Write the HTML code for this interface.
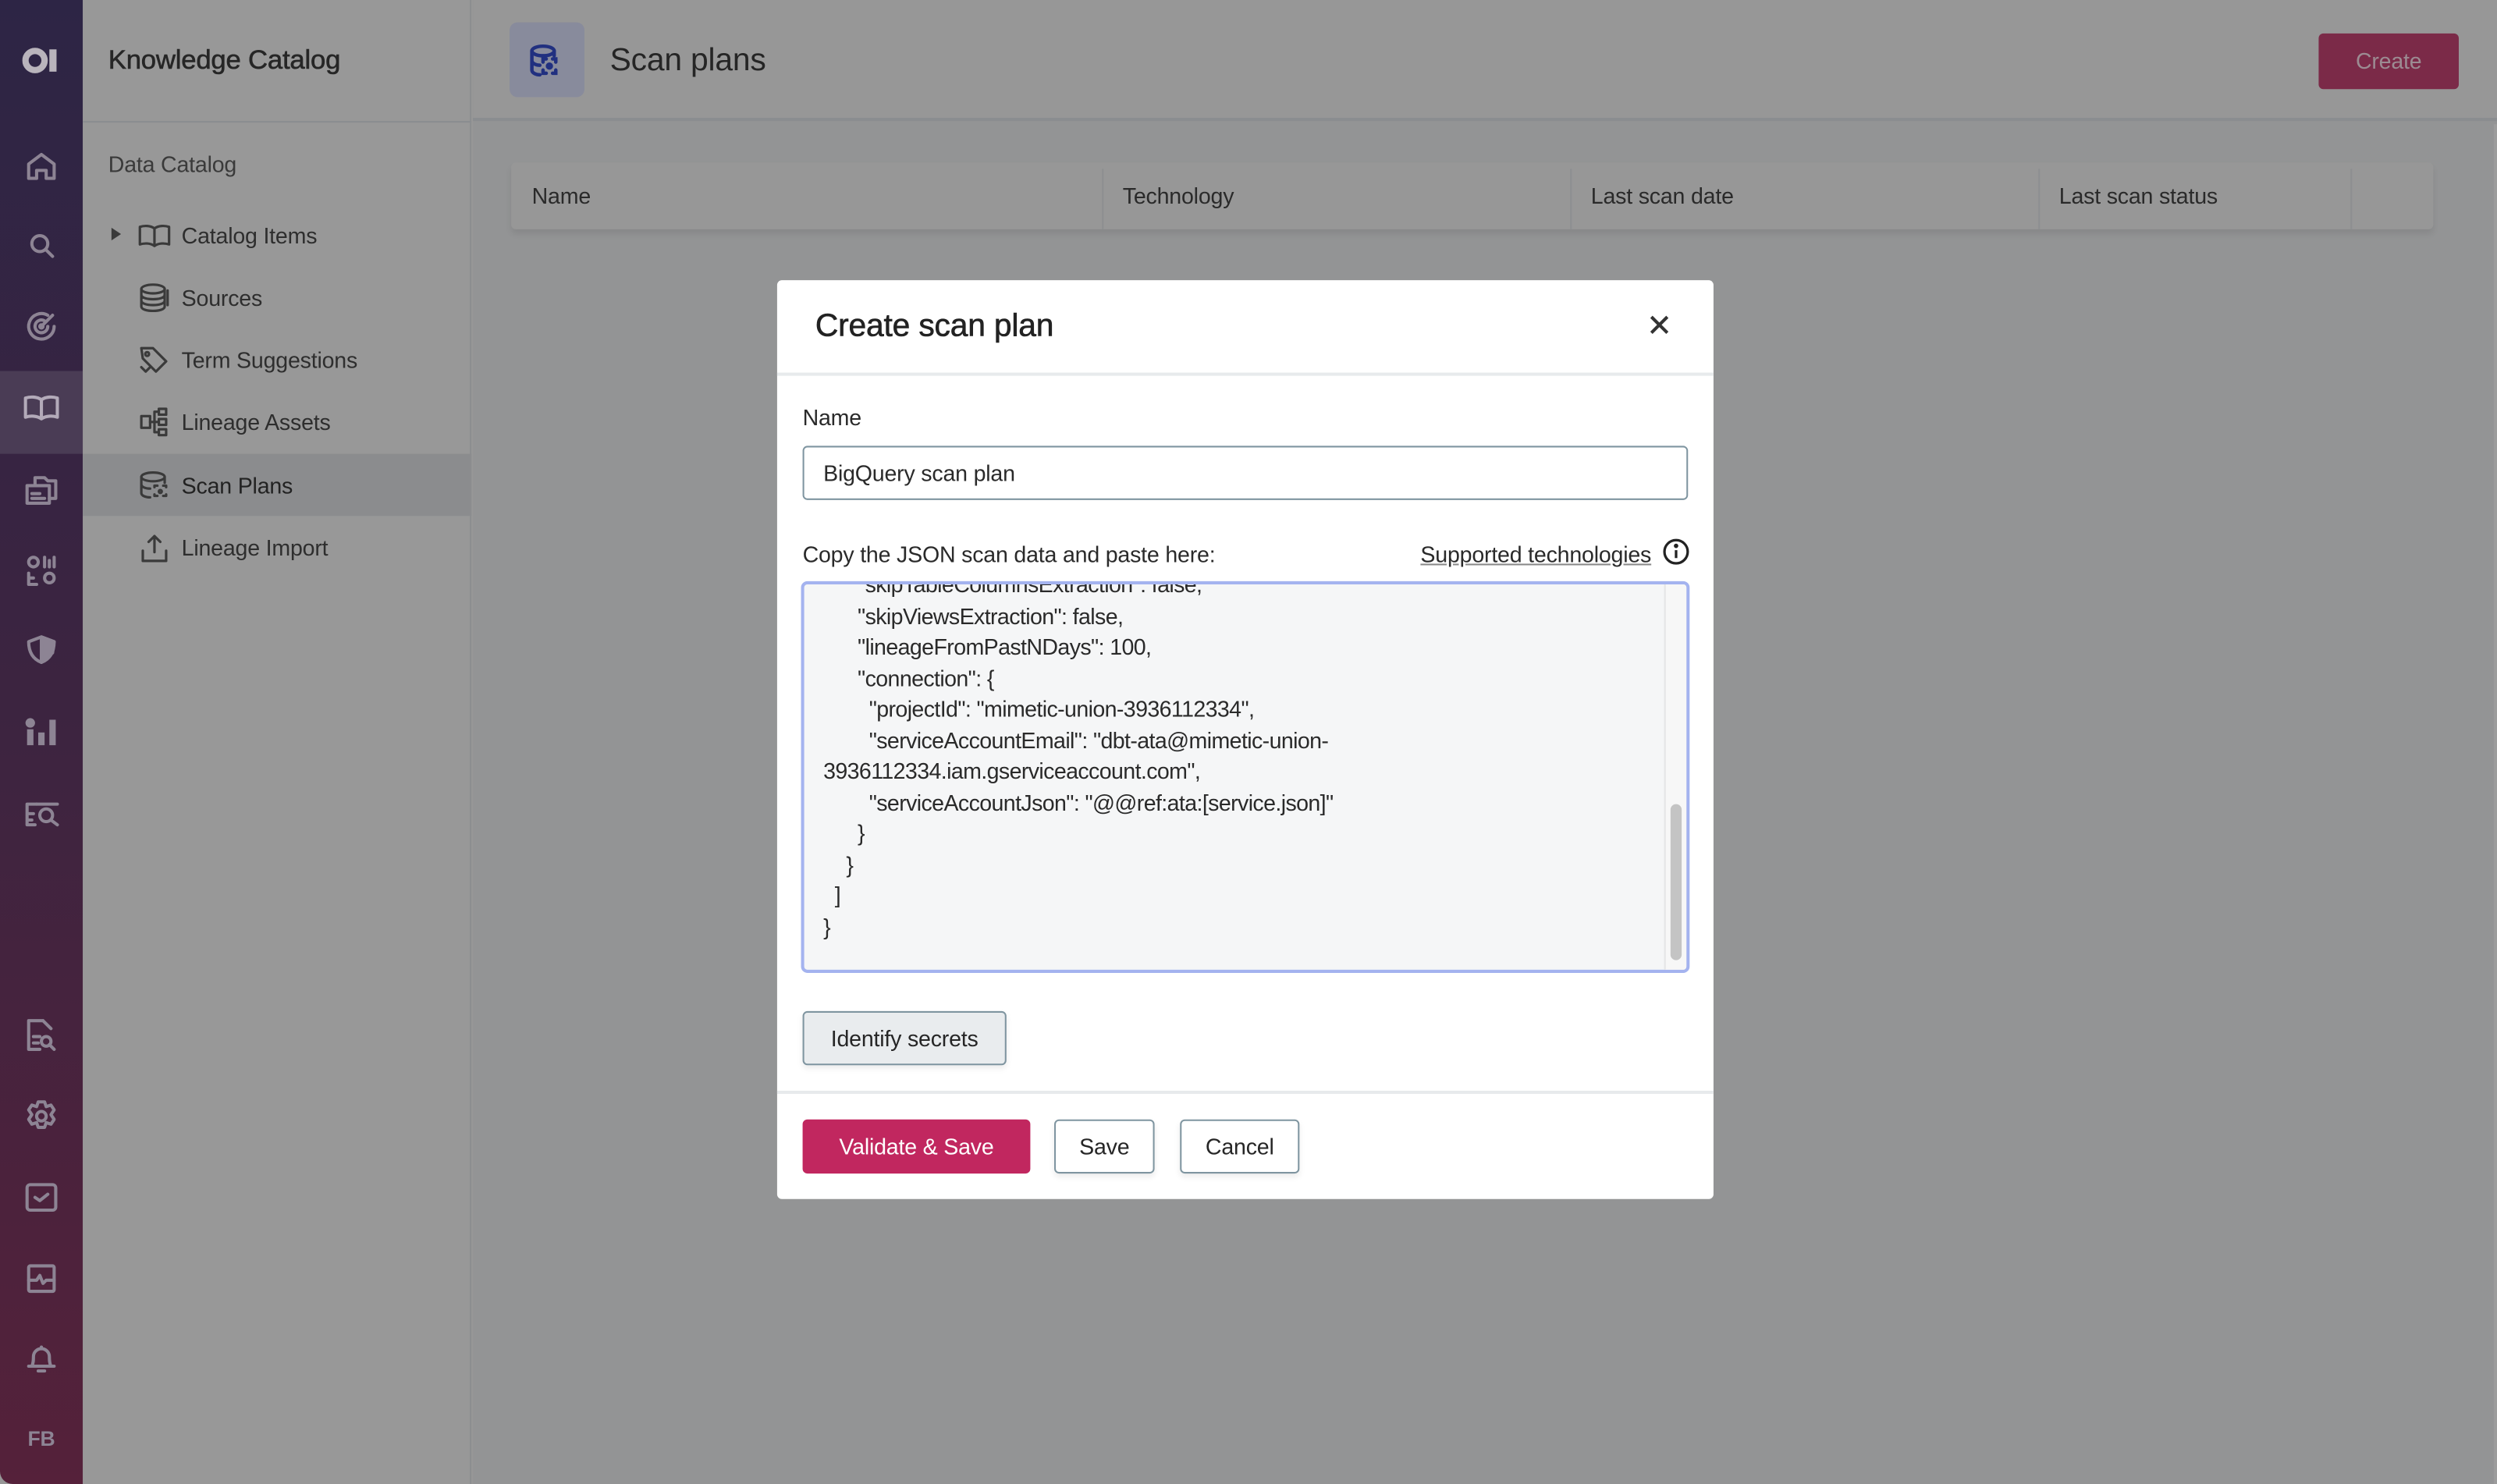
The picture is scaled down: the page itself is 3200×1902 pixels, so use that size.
<!DOCTYPE html>
<html><head><meta charset="utf-8">
<style>
*{box-sizing:border-box;margin:0;padding:0}
html,body{width:3200px;height:1902px;overflow:hidden;background:#979797}
#w{position:absolute;left:0;top:0;width:1568px;height:932px;transform:scale(2.040816);transform-origin:0 0;font-family:"Liberation Sans",sans-serif;color:#2a2a2a;letter-spacing:-0.1px}
.rail{position:absolute;left:0;top:0;width:52px;height:932px;background:linear-gradient(#2d2545,#3d2440 50%,#55213a);border-bottom-left-radius:8px}
.ri{position:absolute;left:14px;width:24px;height:24px}
.ri svg{width:24px;height:24px;fill:none;stroke:#8d8494;stroke-width:2;stroke-linecap:round;stroke-linejoin:round}
.sub{position:absolute;left:52px;top:0;width:244px;height:932px;background:#989898;border-right:1px solid #8c8e90}
.sub h1{position:absolute;left:16px;top:28px;font-size:17px;font-weight:normal;color:#262626;-webkit-text-stroke:0.3px #262626}
.sub .hl{position:absolute;left:0;top:76px;width:244px;height:1px;background:#8a8d90}
.sub .dc{position:absolute;left:16px;top:95px;font-size:14px;color:#3a3a3a}
.it{position:absolute;left:0;width:244px;height:39px;font-size:14px;color:#2e2e2e}
.it span{position:absolute;left:62px;top:12px}
.it svg{position:absolute;left:34px;top:9px;width:22px;height:22px;fill:none;stroke:#3a3a3a;stroke-width:1.7;stroke-linejoin:round;stroke-linecap:round}
.main{position:absolute;left:297px;top:0;width:1271px;height:932px;background:#939495}
.top{position:absolute;left:0;top:0;width:1271px;height:76px;background:#979797;border-bottom:2px solid #8a8d90}
.ic{position:absolute;left:23px;top:14px;width:47px;height:47px;border-radius:5px;background:#888b9c}
.top .t{position:absolute;left:86px;top:27px;font-size:20px;color:#252525}
.cr{position:absolute;left:1159px;top:21px;width:88px;height:35px;border-radius:3px;background:#7b2a48;color:#9c8b92;font-size:14px;text-align:center;line-height:35px}
.tbl{position:absolute;left:24px;top:102px;width:1207px;height:42px;background:#979797;border-radius:3px;box-shadow:0 3px 4px rgba(0,0,0,.08)}
.tbl div{position:absolute;top:13px;font-size:14px;color:#2a2a2a}
.tbl i{position:absolute;top:4px;width:1px;height:38px;background:#8d8f91}
.dlg{position:absolute;left:488px;top:176px;width:588px;height:577px;background:#fff;border-radius:3px}
.lbl{position:absolute;font-size:14px;color:#2a2a2a}
.inp{position:absolute;left:16px;top:104px;width:556px;height:34px;border:1px solid #7f95a0;border-radius:3px;font-size:14px;padding:8px 12px;color:#2a2a2a}
.ta{position:absolute;left:15px;top:189px;width:558px;height:246px;border:2px solid #a4b3ef;border-radius:4px;background:#f5f6f7;overflow:hidden}
.ta pre{position:absolute;left:12px;top:-9px;font-family:"Liberation Sans",sans-serif;font-size:14px;line-height:19.5px;color:#2a2a2a;white-space:pre;letter-spacing:-0.3px}
.sb{position:absolute;right:0;top:0;width:14px;height:242px;border-left:1px solid #e4e5e6;background:#f7f7f7}
.sb b{position:absolute;left:3px;top:138px;width:7px;height:98px;border-radius:4px;background:#c4c4c4}
.btn{position:absolute;height:34px;border:1px solid #7f95a0;border-radius:3px;font-size:14px;line-height:32px;text-align:center;color:#262626;box-shadow:0 2px 4px rgba(0,0,0,.08);background:#fff}
</style></head><body><div id="w">
<div class="rail">
 <div style="position:absolute;left:14px;top:29px;width:24px;height:18px">
  <svg width="24" height="18" viewBox="0 0 24 18"><circle cx="8" cy="9" r="6" fill="none" stroke="#b9b4bc" stroke-width="4"/><rect x="17" y="2" width="4.5" height="14" fill="#b9b4bc"/></svg></div>
 <div class="ri" style="top:92px"><svg viewBox="0 0 24 24"><path d="M4 11l8-6 8 6v9h-5v-5h-6v5H4z"/></svg></div>
 <div class="ri" style="top:142px"><svg viewBox="0 0 24 24"><circle cx="11" cy="11" r="5"/><path d="M15 15l4 4"/></svg></div>
 <div class="ri" style="top:193px"><svg viewBox="0 0 24 24"><path d="M20 12a8 8 0 1 1-4-7"/><path d="M16 12a4 4 0 1 1-2-3.5"/><circle cx="12" cy="12" r="1"/><path d="M12 12l7-7"/></svg></div>
 <div style="position:absolute;left:0;top:233px;width:52px;height:52px;background:#4a3c55"></div>
 <div class="ri" style="top:244px"><svg viewBox="0 0 24 24" style="stroke:#b3aab9"><path d="M2 6c3-1 7-1 10 1 3-2 7-2 10-1v12c-3-1-7-1-10 1-3-2-7-2-10-1z"/><path d="M12 7v12"/></svg></div>
 <div class="ri" style="top:295px"><svg viewBox="0 0 24 24"><path d="M3 10h14v11H3z"/><path d="M8 10V5h6l2 2h5v11h-4"/><path d="M6 15h5M6 18h8"/></svg></div>
 <div class="ri" style="top:346px"><svg viewBox="0 0 24 24"><circle cx="7" cy="7" r="3"/><circle cx="17" cy="17" r="3"/><path d="M4 14v7h5M4 17h3M14 4v6M17 6v4M20 4v6"/></svg></div>
 <div class="ri" style="top:397px"><svg viewBox="0 0 24 24"><path d="M4 6l8-3 8 3c0 7-3 11-8 13-5-2-8-6-8-13z"/><path d="M12 3v16l7-6 1-7z" fill="#8d8494"/></svg></div>
 <div class="ri" style="top:448px"><svg viewBox="0 0 24 24" style="fill:#8d8494;stroke:none"><circle cx="5" cy="6" r="3"/><rect x="3" y="10" width="4" height="10"/><rect x="10" y="12" width="4" height="8"/><rect x="17" y="4" width="4" height="16"/></svg></div>
 <div class="ri" style="top:499px"><svg viewBox="0 0 24 24"><path d="M9 6H3v13h5M3 12h4M3 16h3"/><circle cx="15" cy="13" r="4"/><path d="M18 16l4 3M9 6h13"/></svg></div>
 <div class="ri" style="top:638px"><svg viewBox="0 0 24 24"><path d="M13 3H4v18h7M13 3l5 5"/><circle cx="15" cy="16" r="3"/><path d="M17 18l3 3M7 13h4M7 17h3"/></svg></div>
 <div class="ri" style="top:689px"><svg viewBox="0 0 24 24"><circle cx="12" cy="12" r="3"/><path d="M10 3h4l1 3 3-1 2 3-2 3 2 3-2 3-3-1-1 3h-4l-1-3-3 1-2-3 2-3-2-3 2-3 3 1z"/></svg></div>
 <div class="ri" style="top:740px"><svg viewBox="0 0 24 24"><rect x="3" y="4" width="18" height="16" rx="2"/><path d="M8 12l3 2 5-4"/></svg></div>
 <div class="ri" style="top:791px"><svg viewBox="0 0 24 24"><rect x="4" y="4" width="16" height="16" rx="1"/><path d="M4 13h5l2-3 2 5 2-2h5"/></svg></div>
 <div class="ri" style="top:842px"><svg viewBox="0 0 24 24"><path d="M6 16c1-2 1-4 1-6a5 5 0 0 1 10 0c0 2 0 4 1 6z"/><path d="M4 16h16M10 19h4M12 4v1"/></svg></div>
 <div style="position:absolute;left:0;top:896px;width:52px;text-align:center;font-size:13px;font-weight:bold;color:#8d8494">FB</div>
</div>
<div class="sub">
 <h1>Knowledge Catalog</h1><div class="hl"></div>
 <div class="dc">Data Catalog</div>
 <div class="it" style="top:128px"><div style="position:absolute;left:18px;top:15px;border-left:6px solid #3a3a3a;border-top:4.5px solid transparent;border-bottom:4.5px solid transparent"></div><svg viewBox="0 0 24 24"><path d="M2 6c3-1 7-1 10 1 3-2 7-2 10-1v12c-3-1-7-1-10 1-3-2-7-2-10-1z"/><path d="M12 7v12"/></svg><span>Catalog Items</span></div>
 <div class="it" style="top:167px"><svg viewBox="0 0 24 24"><ellipse cx="11" cy="6" rx="8" ry="3"/><path d="M3 6v12c0 2 4 3 8 3s8-1 8-3V6M3 10c0 2 4 3 8 3s8-1 8-3M3 14c0 2 4 3 8 3s8-1 8-3M21 7v10"/></svg><span>Sources</span></div>
 <div class="it" style="top:206px"><svg viewBox="0 0 24 24"><path d="M3 4h8l9 9-7 7-9-9z"/><circle cx="7" cy="8" r="1.3"/><path d="M3 17l3 3 3-3"/></svg><span>Term Suggestions</span></div>
 <div class="it" style="top:245px"><svg viewBox="0 0 24 24"><rect x="3" y="8" width="6" height="8"/><rect x="15" y="3" width="5" height="4"/><rect x="15" y="10" width="5" height="4"/><rect x="15" y="17" width="5" height="4"/><path d="M9 12h6M12 5v14M12 5h3M12 19h3"/></svg><span>Lineage Assets</span></div>
 <div class="it" style="top:285px;background:#8b8c8e"><svg viewBox="0 0 24 24"><ellipse cx="11" cy="6" rx="8" ry="3"/><path d="M3 6v11c0 2 3 3 6 3M3 11c0 2 3 3 6 3M19 6v4"/><path d="M12 13v-1h2M18 12h2v1M20 18v1h-2M14 19h-2v-1" /><circle cx="16" cy="16" r="1"/></svg><span style="color:#222">Scan Plans</span></div>
 <div class="it" style="top:324px"><svg viewBox="0 0 24 24"><path d="M12 15V4M8 8l4-4 4 4M4 14v7h16v-7"/></svg><span>Lineage Import</span></div>
</div>
<div class="main">
 <div class="top">
  <div class="ic"><svg width="47" height="47" viewBox="0 0 47 47" fill="none" stroke="#213080" stroke-width="2.2" stroke-linecap="round"><ellipse cx="21" cy="18" rx="7" ry="3"/><path d="M14 18v12c0 2 3 3 5 3M14 24c0 2 3 3 5 3M28 18v3"/><path d="M21 25v-2h2M27 23h2v2M29 30v2h-2M23 32h-2v-2"/><circle cx="25" cy="27.5" r="1.2" fill="#213080"/></svg></div>
  <div class="t">Scan plans</div>
  <div class="cr">Create</div>
 </div>
 <div class="tbl">
  <div style="left:13px">Name</div><i style="left:371px"></i>
  <div style="left:384px">Technology</div><i style="left:665px"></i>
  <div style="left:678px">Last scan date</div><i style="left:959px"></i>
  <div style="left:972px">Last scan status</div><i style="left:1155px"></i>
 </div>
 <div style="position:absolute;right:0;top:78px;width:2px;height:854px;background:#9c9c9c"></div>
</div>
<div class="dlg">
 <div style="position:absolute;left:24px;top:18px;font-size:20px;color:#222;-webkit-text-stroke:0.3px #222">Create scan plan</div>
 <svg style="position:absolute;left:547px;top:21px" width="14" height="14" viewBox="0 0 14 14" stroke="#333" stroke-width="2"><path d="M2 2l10 10M12 2L2 12"/></svg>
 <div style="position:absolute;left:0;top:58px;width:588px;height:2px;background:#e7eaec"></div>
 <div class="lbl" style="left:16px;top:78px">Name</div>
 <div class="inp">BigQuery scan plan</div>
 <div class="lbl" style="left:16px;top:164px">Copy the JSON scan data and paste here:</div>
 <div class="lbl" style="left:404px;top:164px;text-decoration:underline;text-decoration-color:#888">Supported technologies</div>
 <svg style="position:absolute;left:556px;top:162px" width="17" height="17" viewBox="0 0 17 17" fill="none" stroke="#222" stroke-width="1.6"><circle cx="8.5" cy="8.5" r="7.3"/><path d="M8.5 7.5v5"/><circle cx="8.5" cy="4.8" r=".6" fill="#222"/></svg>
 <div class="ta"><pre>      "skipTableColumnsExtraction": false,
      "skipViewsExtraction": false,
      "lineageFromPastNDays": 100,
      "connection": {
        "projectId": "mimetic-union-3936112334",
        "serviceAccountEmail": "dbt-ata@mimetic-union-
3936112334.iam.gserviceaccount.com",
        "serviceAccountJson": "@@ref:ata:[service.json]"
      }
    }
  ]
}</pre><div class="sb"><b></b></div></div>
 <div class="btn" style="left:16px;top:459px;width:128px;background:#e9ecee">Identify secrets</div>
 <div style="position:absolute;left:0;top:509px;width:588px;height:2px;background:#e7eaec"></div>
 <div class="btn" style="left:16px;top:527px;width:143px;background:#c1275f;border-color:#c1275f;color:#fff;box-shadow:none">Validate &amp; Save</div>
 <div class="btn" style="left:174px;top:527px;width:63px">Save</div>
 <div class="btn" style="left:253px;top:527px;width:75px">Cancel</div>
</div>
</div></body></html>
